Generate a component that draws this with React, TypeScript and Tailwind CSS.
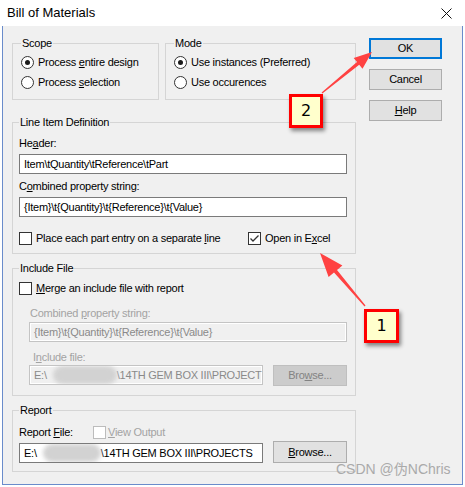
import React from "react";

function Radio({ checked }: { checked?: boolean }) {
  return (
    <span className="w-[13px] h-[13px] rounded-full border border-[#333333] bg-white flex items-center justify-center shrink-0">
      {checked && <span className="w-[5px] h-[5px] rounded-full bg-[#1a1a1a]" />}
    </span>
  );
}

function Check({ checked, disabled }: { checked?: boolean; disabled?: boolean }) {
  return (
    <span
      className={
        disabled
          ? "w-[13px] h-[13px] border border-[#bcbcbc] bg-white flex items-center justify-center shrink-0"
          : "w-[13px] h-[13px] border border-[#333333] bg-white flex items-center justify-center shrink-0"
      }
    >
      {checked && (
        <svg width="11" height="11" viewBox="0 0 11 11">
          <path d="M1.5 5.5 L4 8 L9.5 2.5" fill="none" stroke="#333333" strokeWidth="1.3" />
        </svg>
      )}
    </span>
  );
}

function Blob({ w }: { w: string }) {
  return <span className={w + " inline-block h-[18px] rounded-[9px] bg-[#d2d2d2] blur-[2px] shrink-0"} />;
}

export default function App() {
  return (
    <div className="relative w-[465px] h-[487px] bg-white overflow-hidden font-['Liberation_Sans',Arial,sans-serif] text-[11px] tracking-[-0.25px] text-black">
      {/* Title bar */}
      <div className="h-[26px] flex items-center pl-[7px]">
        <span className="text-[13px] tracking-normal">Bill of Materials</span>
        <svg className="ml-auto mr-[13px]" width="11" height="11" viewBox="0 0 11 11">
          <path d="M0.5 0.5 L10.5 10.5 M10.5 0.5 L0.5 10.5" stroke="#111111" strokeWidth="1" />
        </svg>
      </div>

      {/* Body */}
      <div className="mx-[2px] h-[459px] bg-[#f0f0f0] border-l border-r border-b border-[#6a8ccb] flex pt-[10px] pl-[9px]">
        <div className="w-[344px] flex flex-col">
          <div className="flex gap-[6px]">
            <fieldset className="w-[147px] min-w-0 border border-[#d5d5d5] pl-[8px] pr-[4px] pt-[2px] pb-[7px]">
              <legend className="px-[1px] leading-[14px]">Scope</legend>
              <div className="h-[20px] flex items-center gap-[4px]">
                <Radio checked />
                <span>
                  Process <u>e</u>ntire design
                </span>
              </div>
              <div className="h-[20px] flex items-center gap-[4px]">
                <Radio />
                <span>
                  Process <u>s</u>election
                </span>
              </div>
            </fieldset>
            <fieldset className="w-[191px] min-w-0 border border-[#d5d5d5] pl-[8px] pr-[4px] pt-[2px] pb-[7px]">
              <legend className="px-[1px] leading-[14px]">Mode</legend>
              <div className="h-[20px] flex items-center gap-[4px]">
                <Radio checked />
                <span>Use instances (Preferred)</span>
              </div>
              <div className="h-[20px] flex items-center gap-[4px]">
                <Radio />
                <span>Use occurences</span>
              </div>
            </fieldset>
          </div>

          {/* Line Item Definition */}
          <fieldset className="mt-[15px] min-w-0 border border-[#d5d5d5] pl-[6px] pr-[8px] pb-[5px]">
            <legend className="px-[1px] leading-[14px]">Line Item Definition</legend>
            <div className="mt-[7px] leading-[14px]">
              He<u>a</u>der:
            </div>
            <div className="mt-[4px] h-[20px] border border-[#7a7a7a] bg-white flex items-center px-[4px] whitespace-nowrap overflow-hidden">
              Item\tQuantity\tReference\tPart
            </div>
            <div className="mt-[5px] leading-[14px]">
              C<u>o</u>mbined property string:
            </div>
            <div className="mt-[4px] h-[20px] border border-[#7a7a7a] bg-white flex items-center px-[4px] whitespace-nowrap overflow-hidden">
              {"{Item}\\t{Quantity}\\t{Reference}\\t{Value}"}
            </div>
            <div className="mt-[11px] h-[20px] flex items-center">
              <div className="w-[229px] flex items-center gap-[4px]">
                <Check />
                <span>
                  Place each part entry on a separate <u>l</u>ine
                </span>
              </div>
              <div className="flex items-center gap-[4px]">
                <Check checked />
                <span>
                  Open in E<u>x</u>cel
                </span>
              </div>
            </div>
          </fieldset>

          {/* Include File */}
          <fieldset className="mt-[7px] min-w-0 border border-[#d5d5d5] pl-[6px] pr-[8px] pb-[9px]">
            <legend className="px-[1px] leading-[14px]">Include File</legend>
            <div className="mt-[3px] h-[20px] flex items-center gap-[4px]">
              <Check />
              <span>
                <u>M</u>erge an include file with report
              </span>
            </div>
            <div className="pl-[10px]">
              <div className="mt-[8px] leading-[14px] text-[#a3a3a3] pl-[1px]">
                Combined <u>p</u>roperty string:
              </div>
              <div className="mt-[2px] h-[20px] border border-[#c4c4c4] shadow-[inset_0_0_0_1px_#ffffff] bg-[#f0f0f0] text-[#8a8a8a] flex items-center px-[4px] whitespace-nowrap overflow-hidden">
                {"{Item}\\t{Quantity}\\t{Reference}\\t{Value}"}
              </div>
              <div className="mt-[8px] leading-[14px] text-[#a3a3a3] pl-[4px]">
                I<u>n</u>clude file:
              </div>
              <div className="mt-[1px] flex items-start gap-[10px]">
                <div className="w-[234px] h-[20px] border border-[#c4c4c4] shadow-[inset_0_0_0_1px_#ffffff] bg-[#f0f0f0] text-[#8a8a8a] flex items-center px-[4px] whitespace-nowrap overflow-hidden">
                  <span className="shrink-0">E:\</span>
                  <Blob w="w-[64px] ml-[6px]" />
                  <span className="shrink-0">\14TH GEM BOX III\PROJECT</span>
                </div>
                <div className="w-[74px] h-[21px] bg-[#cccccc] border border-[#bfbfbf] text-[#838383] flex items-center justify-center">
                  <span>
                    Bro<u>w</u>se...
                  </span>
                </div>
              </div>
            </div>
          </fieldset>

          {/* Report */}
          <fieldset className="mt-[7px] min-w-0 border border-[#d5d5d5] pl-[6px] pr-[8px] pb-[8px]">
            <legend className="px-[1px] leading-[14px]">Report</legend>
            <div className="mt-[6px] h-[18px] flex items-center">
              <span className="w-[74px]">
                Report <u>F</u>ile:
              </span>
              <Check disabled />
              <span className="ml-[2px] text-[#a3a3a3]">
                <u>V</u>iew Output
              </span>
            </div>
            <div className="flex items-end gap-[10px]">
              <div className="w-[244px] h-[20px] border border-[#7a7a7a] bg-white flex items-center px-[4px] whitespace-nowrap overflow-hidden">
                <span className="shrink-0">E:\</span>
                <Blob w="w-[58px] ml-[6px]" />
                <span className="shrink-0">\14TH GEM BOX III\PROJECTS</span>
              </div>
              <div className="w-[74px] h-[22px] bg-[#e1e1e1] border border-[#adadad] flex items-center justify-center">
                <span>
                  <u>B</u>rowse...
                </span>
              </div>
            </div>
          </fieldset>
        </div>

        {/* Buttons */}
        <div className="ml-[13px] mt-[2px] w-[73px] flex flex-col gap-[10px]">
          <div className="h-[21px] bg-[#e1e1e1] border-2 border-[#0078d7] flex items-center justify-center">OK</div>
          <div className="h-[21px] bg-[#e1e1e1] border border-[#adadad] flex items-center justify-center">Cancel</div>
          <div className="h-[21px] bg-[#e1e1e1] border border-[#adadad] flex items-center justify-center">
            <span>
              <u>H</u>elp
            </span>
          </div>
        </div>
      </div>

      {/* Annotation arrows */}
      <svg className="absolute left-0 top-0 pointer-events-none" width="465" height="487" viewBox="0 0 465 487">
        <polygon
          points="321.6,92.5 357.0,62.0 353.7,58.0 372,52 362.5,68.8 359.2,64.8 322.4,93.5"
          fill="#ff4242"
        />
        <polygon
          points="365.5,305.6 337.0,270.0 342.4,265.5 320,253 328.6,277.1 334.0,272.6 364.5,306.4"
          fill="#ff4242"
        />
      </svg>

      {/* Callouts */}
      <div className="absolute left-[289px] top-[94px] w-[34px] h-[34px] border-[3px] border-[#ff0000] bg-[#ffffcc] shadow-[2px_3px_4px_rgba(0,0,0,0.45)] flex items-center justify-center font-['DejaVu_Sans',sans-serif] text-[16px] tracking-normal">
        2
      </div>
      <div className="absolute left-[364px] top-[309px] w-[35px] h-[34px] border-[3px] border-[#ff0000] bg-[#ffffcc] shadow-[2px_3px_4px_rgba(0,0,0,0.45)] flex items-center justify-center font-['DejaVu_Sans',sans-serif] text-[16px] tracking-normal">
        1
      </div>

      {/* Watermark */}
      <div className="absolute left-[336px] top-[461px] text-[14px] leading-[17px] tracking-normal text-[#aaaaaa] font-['Liberation_Sans','Noto_Sans_CJK_SC',sans-serif]">
        CSDN @伪NChris
      </div>
    </div>
  );
}
